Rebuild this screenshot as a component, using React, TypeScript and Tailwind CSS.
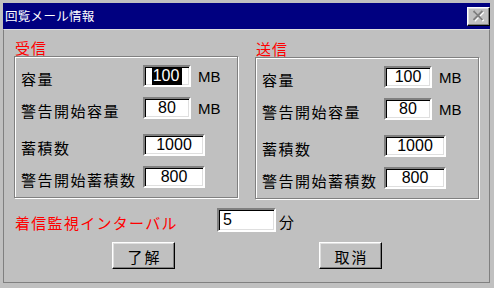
import React from "react";

const jp = { fontFamily: '"Noto Sans CJK JP", "Noto Sans", sans-serif' };
const lat = { fontFamily: '"Liberation Sans", Arial, sans-serif' };

function Field({ w, value, selected }: { w: number; value: string; selected?: boolean }) {
  return (
    <div
      className="h-[22px] bg-white border-2 border-t-[#808080] border-l-[#808080] border-b-white border-r-white shadow-[inset_1px_1px_0_#000,inset_-1px_-1px_0_#dfdfdf] flex items-center justify-center text-[16px] leading-none text-black"
      style={{ ...lat, width: w }}
    >
      {selected ? (
        <span className="flex items-center">
          <span className="bg-black text-white px-[1px] h-[17px] flex items-center">{value}</span>
          <span className="w-[2px] h-[17px] bg-black" />
        </span>
      ) : (
        <span>{value}</span>
      )}
    </div>
  );
}

function Row({ label, w, value, unit, selected, mt }: { label: string; w: number; value: string; unit?: boolean; selected?: boolean; mt: string }) {
  return (
    <div className={`flex items-center h-[22px] ${mt}`}>
      <div className="w-[122px] text-[15px] tracking-[1.5px] leading-none text-black pt-[4px] whitespace-nowrap" style={jp}>
        {label}
      </div>
      <Field w={w} value={value} selected={selected} />
      {unit && (
        <span className="ml-[7px] text-[15px] leading-none text-black" style={lat}>
          MB
        </span>
      )}
    </div>
  );
}

function Group({ title, selected, shift }: { title: string; selected?: boolean; shift?: boolean }) {
  return (
    <div className={`w-[224px] flex flex-col ${shift ? "pt-[1px]" : ""}`}>
      <div className="h-[16px] pl-[1px] text-[15px] tracking-[1px] leading-[16px] text-[#ff0000]" style={jp}>
        {title}
      </div>
      <div className="h-[142px] border border-[#808080] shadow-[inset_1px_1px_0_#fff,1px_1px_0_#fff] pl-[6px] pt-[8px] flex flex-col">
        <Row label="容量" w={48} value="100" unit selected={selected} mt="mt-0" />
        <Row label="警告開始容量" w={48} value="80" unit mt="mt-[10px]" />
        <Row label="蓄積数" w={62} value="1000" mt="mt-[15px]" />
        <Row label="警告開始蓄積数" w={62} value="800" mt="mt-[10px]" />
      </div>
    </div>
  );
}

function Button({ label }: { label: string }) {
  return (
    <div
      className="w-[63px] h-[27px] bg-[#c0c0c0] border border-t-white border-l-white border-b-black border-r-black shadow-[inset_-1px_-1px_0_#808080,inset_1px_1px_0_#dfdfdf] flex items-center justify-center text-[15px] tracking-[2px] text-black leading-none pt-[2px] pl-[2px]"
      style={jp}
    >
      {label}
    </div>
  );
}

export default function App() {
  return (
    <div className="w-[494px] h-[288px] bg-[#c0c0c0] pt-[3px] pl-[3px] pr-[4px] pb-[5px] flex flex-col overflow-hidden">
      <div className="h-[26px] bg-[#000080] flex items-center justify-between pl-[2px] pr-0">
        <span className="text-white text-[12.5px] tracking-[0.3px] leading-none pt-[1px]" style={jp}>
          回覧メール情報
        </span>
        <div className="w-[23px] h-[19px] bg-[#c0c0c0] border border-t-white border-l-white border-b-black border-r-black shadow-[inset_-1px_-1px_0_#808080,inset_1px_1px_0_#dfdfdf] flex items-center justify-center">
          <svg width="13" height="12" viewBox="0 0 13 12">
            <path d="M2.5 2 L11.5 11 M11.5 2 L2.5 11" stroke="#ffffff" strokeWidth="2" />
            <path d="M1.5 1 L10.5 10 M10.5 1 L1.5 10" stroke="#808080" strokeWidth="2" />
          </svg>
        </div>
      </div>
      <div className="flex-1 border border-[#808080] border-t-[#dfdfdf] flex flex-col pl-[10px] pt-[10px]">
        <div className="flex gap-[17px]">
          <Group title="受信" selected />
          <Group title="送信" shift />
        </div>
        <div className="flex items-center h-[24px] mt-[9px] pl-[1px]">
          <div className="w-[202px] text-[15px] tracking-[1.3px] leading-none text-[#ff0000] pt-[4px] whitespace-nowrap" style={jp}>
            着信監視インターバル
          </div>
          <div
            className="w-[59px] h-[24px] bg-white border-2 border-t-[#808080] border-l-[#808080] border-b-white border-r-white shadow-[inset_1px_1px_0_#000,inset_-1px_-1px_0_#dfdfdf] flex items-center pl-[4px] text-[16px] leading-none text-black"
            style={lat}
          >
            5
          </div>
          <span className="ml-[3px] text-[15px] leading-none text-black pt-[3px]" style={jp}>
            分
          </span>
        </div>
        <div className="flex mt-[10px] pl-[98px]">
          <Button label="了解" />
          <div className="ml-[144px]">
            <Button label="取消" />
          </div>
        </div>
      </div>
    </div>
  );
}
